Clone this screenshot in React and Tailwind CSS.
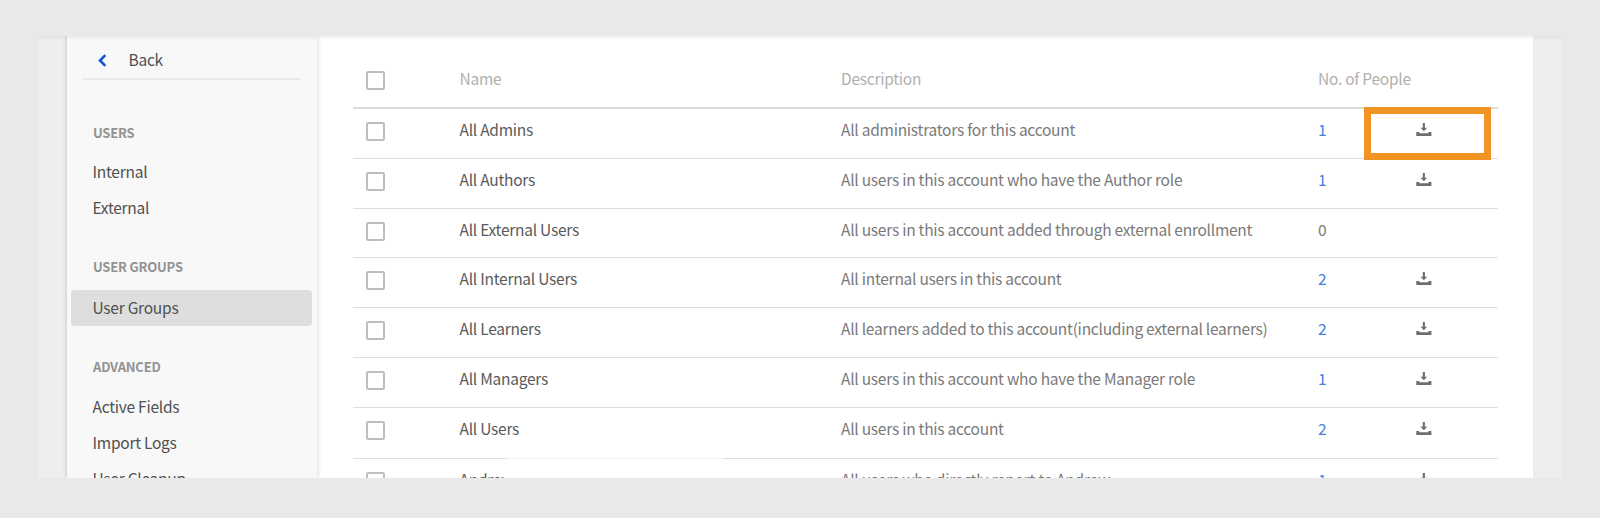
const sections = [
  { title: 'USERS', space: 'mt-[43px]', gap: 'mb-[11px]', items: ['Internal', 'External'] },
  { title: 'USER GROUPS', space: 'mt-[31px]', gap: 'mb-[13px]', items: ['User Groups'] },
  { title: 'ADVANCED', space: 'mt-[31px]', gap: 'mb-[12px]', items: ['Active Fields', 'Import Logs', 'User Cleanup'] },
];

const rows = [
  { name: 'All Admins', desc: 'All administrators for this account', count: 1, h: 'h-[50px]', highlight: true },
  { name: 'All Authors', desc: 'All users in this account who have the Author role', count: 1, h: 'h-[50px]' },
  { name: 'All External Users', desc: 'All users in this account added through external enrollment', count: 0, h: 'h-[49.4px]' },
  { name: 'All Internal Users', desc: 'All internal users in this account', count: 2, h: 'h-[49.8px]' },
  { name: 'All Learners', desc: 'All learners added to this account(including external learners)', count: 2, h: 'h-[49.8px]' },
  { name: 'All Managers', desc: 'All users in this account who have the Manager role', count: 1, h: 'h-[50px]' },
  { name: 'All Users', desc: 'All users in this account', count: 2, h: 'h-[51px]' },
  { name: 'Andrew', desc: 'All users who directly report to Andrew', count: 1, h: 'h-[50px]' },
];

const columns = 'grid grid-cols-[106.5px_381.5px_477px_98.5px_1fr]';

function Checkbox() {
  return <span className="mt-[13px] ml-[12.5px] block size-[19px] rounded-[2px] border-2 border-[#bebebe] bg-white" />;
}

function DownloadIcon() {
  return (
    <svg className="mt-[14px] -ml-[0.5px] block" width="16" height="13" viewBox="0 0 16 13" fill="#6e6e6e">
      <path d="M6.8 0h2.1v4.8h2.3L7.85 8.3 4.5 4.8h2.3z" />
      <path d="M.3 9h3v1.2h9.1V9h3v4H.3z" />
    </svg>
  );
}

function Sidebar() {
  return (
    <aside className="relative z-10 w-[250px] shrink-0 bg-[#f8f8f8] shadow-[0_0_5px_rgba(0,0,0,0.2)]">
      <div className="mr-[17px] ml-[16px] flex h-[44px] border-b-2 border-[#e8e8e8] pt-2 leading-[30px] text-[#505050]">
        <svg className="mt-[10px] ml-[15px]" width="9" height="13" viewBox="0 0 9 13" fill="none" stroke="#0d55d0" strokeWidth="2.5">
          <path d="M7.3 1.2 2 6.5l5.3 5.3" />
        </svg>
        <span className="ml-[21.5px]">Back</span>
      </div>
      {sections.map((s) => (
        <section key={s.title} className={s.space}>
          <h2 className={'ml-[26px] text-[13px] leading-[20px] font-bold tracking-[-0.2px] text-[#929292] ' + s.gap}>
            {s.title}
          </h2>
          {s.items.map((item) => (
            <div
              key={item}
              className={
                'mr-[5.5px] ml-1 h-9 rounded pl-[21.5px] leading-[34px] text-[#505050] ' +
                (item === 'User Groups' ? 'bg-[#dedede]' : '')
              }
            >
              {item}
            </div>
          ))}
        </section>
      ))}
    </aside>
  );
}

function GroupTable() {
  return (
    <main className="relative flex-1 bg-white pr-[35px] pl-[36px]">
      <div className={columns + ' h-[73px] border-b-2 border-[#dcdcdc] pt-[22px] leading-[40px] text-[#b0b0b0]'}>
        <Checkbox />
        <span>Name</span>
        <span>Description</span>
        <span className="whitespace-nowrap">No. of People</span>
      </div>
      {rows.map((r) => (
        <div key={r.name} className={columns + ' relative border-b border-[#dedede] leading-[40px] ' + r.h}>
          <Checkbox />
          <span className="text-[#5a5a5a]">{r.name}</span>
          <span className="whitespace-nowrap text-[#7a7a7a]">{r.desc}</span>
          <span className={r.count ? 'text-[#4080d8]' : 'text-[#7a7a7a]'}>{r.count}</span>
          {r.count > 0 && <DownloadIcon />}
          {r.highlight && (
            <span className="absolute -top-[2px] right-[7px] z-10 h-[53px] w-[127px] border-[7px] border-[#f29423]" />
          )}
        </div>
      ))}
      <div className="absolute top-[422px] left-[189px] h-[20px] w-[217px] border-t border-[#f2f2f2] bg-white" />
    </main>
  );
}

export default function App() {
  return (
    <div className="h-[518px] w-[1600px] bg-[#e9e9e9] px-[38px] pt-[36px] font-['Noto_Sans_CJK_SC',sans-serif] text-[15.5px] tracking-[-0.25px]">
      <div className="relative flex h-[442px] overflow-hidden bg-[#eeeeee] pr-[29px] pl-[29px]">
        <Sidebar />
        <GroupTable />
        <div className="absolute inset-x-0 top-0 z-20 h-1 bg-linear-to-b from-black/6 to-transparent" />
      </div>
    </div>
  );
}
